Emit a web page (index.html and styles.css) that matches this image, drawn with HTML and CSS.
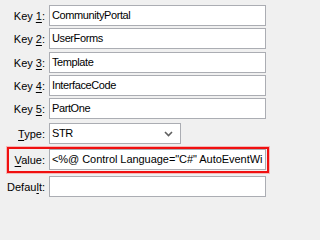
FILE: index.html
```html
<!DOCTYPE html>
<html>
<head>
<meta charset="utf-8">
<link rel="stylesheet" href="styles.css">
</head>
<body>
<div class="form">
  <div class="row r1"><label class="lbl">Key <u>1</u>:</label><div class="field">CommunityPortal</div></div>
  <div class="row r2"><label class="lbl">Key <u>2</u>:</label><div class="field">UserForms</div></div>
  <div class="row r3"><label class="lbl">Key <u>3</u>:</label><div class="field">Template</div></div>
  <div class="row r4"><label class="lbl">Key <u>4</u>:</label><div class="field">InterfaceCode</div></div>
  <div class="row r5"><label class="lbl">Key <u>5</u>:</label><div class="field">PartOne</div></div>
  <div class="row r6"><label class="lbl"><u>T</u>ype:</label>
    <div class="field select"><span>STR</span>
      <svg class="chev" width="9" height="6" viewBox="0 0 9 6"><path d="M1 1 L4.5 4.5 L8 1" fill="none" stroke="#606060" stroke-width="1.6"/></svg>
    </div>
  </div>
  <div class="hl">
    <div class="row"><label class="lbl lbl-in"><u>V</u>alue:</label><div class="field value">&lt;%@ Control Language="C#" AutoEventWi</div></div>
  </div>
  <div class="row r8"><label class="lbl">Defau<u>l</u>t:</label><div class="field"></div></div>
</div>
</body>
</html>
```
FILE: styles.css
```css
html, body {
  margin: 0;
  padding: 0;
  background: #f0f0f0;
}
body {
  width: 271px;
  height: 202px;
  overflow: hidden;
  font-family: "Liberation Sans", Arial, sans-serif;
  font-size: 11px;
  color: #000;
}
.form {
  display: flex;
  flex-direction: column;
  padding-top: 5px;
}
.row {
  display: flex;
  align-items: center;
  gap: 4px;
  height: 21px;
}
.r2 { margin-top: 2px; }
.r3 { margin-top: 3px; }
.r4 { margin-top: 2px; }
.r5 { margin-top: 2px; }
.r6 { margin-top: 4px; }
.r8 { margin-top: 3px; }
.lbl {
  width: 45px;
  flex: none;
  text-align: right;
  white-space: nowrap;
  color: #000;
}
.lbl u {
  text-decoration-thickness: 1px;
  text-underline-offset: 2px;
}
.lbl-in {
  width: 36px;
}
.field {
  box-sizing: border-box;
  width: 217px;
  height: 21px;
  flex: none;
  background: #fff;
  border: 1px solid #abadb3;
  padding: 0 2px;
  line-height: 19px;
  white-space: nowrap;
  overflow: hidden;
  letter-spacing: -0.4px;
}
.value {
  letter-spacing: -0.05px;
  padding-right: 0;
}
.select {
  width: 132px;
  display: flex;
  align-items: center;
  justify-content: space-between;
  padding: 0 7px 0 2px;
}
.chev {
  display: block;
}
.hl {
  box-sizing: border-box;
  margin: 3px 0 0 7px;
  width: 262px;
  height: 26px;
  border: 2px solid #f01010;
  box-shadow: 0 0 0 1px rgba(255, 80, 80, 0.35);
  padding: 0 1px 0 0;
}
```
